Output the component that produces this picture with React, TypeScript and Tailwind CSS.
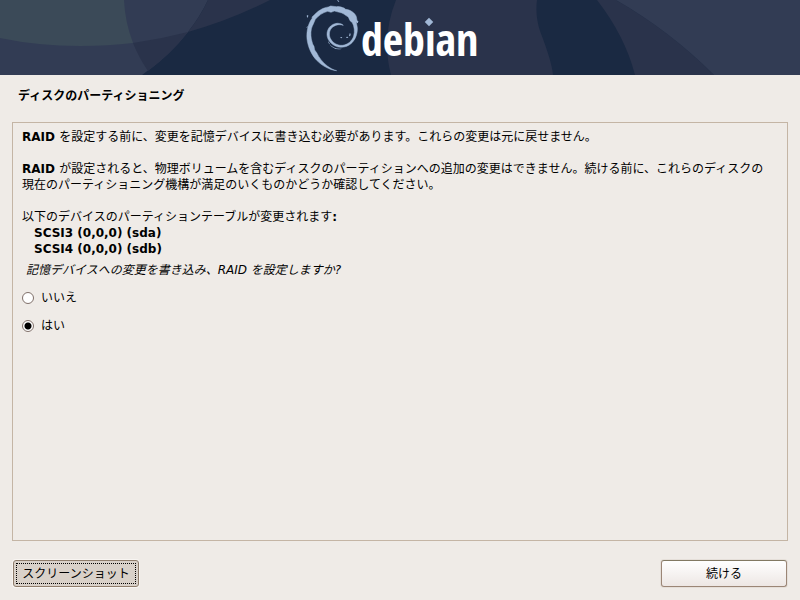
import React, { useState } from 'react';

const devices = ['SCSI3 (0,0,0) (sda)', 'SCSI4 (0,0,0) (sdb)'];

const choices = [
  { id: 'no', label: 'いいえ' },
  { id: 'yes', label: 'はい' },
];

const Swirl: React.FC = () => (
  <svg
    className="h-[75px] w-16 shrink-0"
    viewBox="0 0 192 225"
    fill="#a1b8d6"
    stroke="#a1b8d6"
    strokeWidth="1.5"
    aria-hidden="true"
  >
    <path d="M110 212C87 210 65 196 50 181C35 165 24 142 21 117C19 92 25 70 37 54C34 52 38 49 42 46C52 34 68 23 85 21L92 18L110 20C121 19 134 24 137 28C151 29 165 39 169 50L171 61L174 66L169 67L172 83C173 101 166 120 153 131C140 142 121 145 106 138C91 131 81 117 81 103C81 87 91 75 105 71C115 68 125 71 130 76C116 71 103 76 95 84C88 92 86 104 91 115C98 129 112 137 127 136C143 134 156 124 161 108C165 94 163 80 157 68L150 62L145 51C135 46 129 38 118 37L103 33L93 37L83 34C68 38 55 47 46 58L40 72L37 78C32 88 32 105 34 117L38 132L42 139L44 150L50 158C57 173 68 187 82 198C91 205 101 210 110 212Z" />
    <path
      stroke="none"
      d="M88 132C97 142 110 148 126 146C111 151 96 145 88 132ZM84 123L91 133L86 130ZM149 100l3 1-1 6-4 2zM122 111l5 1-2 3-4-2zM138 111l5-1 2 3-5 1zM20 47l4-2 1 3-3 6zM172 62l3 2-2 6-3-2zM111 0l4 1 3 5-3-1zM22 78l-3 6 4-2z"
    />
  </svg>
);

const Banner: React.FC = () => (
  <header className="relative h-[75px] shrink-0 overflow-hidden bg-[#1a2942]">
    <svg
      className="absolute inset-0 w-full h-full"
      viewBox="0 0 800 75"
      preserveAspectRatio="xMidYMid slice"
      aria-hidden="true"
    >
      <path fill="#323c54" d="M0 0H208Q200 17 188 32Q169 56 142 75H0Z" />
      <path fill="#3b4a58" d="M0 0H124Q125 22 133 43Q108 46 80 46Q38 46 0 38Z" />
      <path fill="#2a334b" d="M133 43Q161 39 188 32Q171 54 148 71Q139 58 133 43Z" />
      <path fill="#2a334b" d="M208 0H270Q231 20 188 32Q200 17 208 0Z" />
      <path fill="#2a334b" d="M396 0H537Q535 16 540 31Q552 62 553 75H391Q381 37 396 0Z" />
      <path fill="#2a334b" d="M597 0H616Q670 31 714 75H635Q625 36 597 0Z" />
      <path fill="#323c54" d="M616 0H800V75H714Q670 31 616 0Z" />
    </svg>
    <div className="relative mx-auto flex w-[200px] items-start">
      <Swirl />
      <div className="relative -ml-[3px] pt-[15px]">
        <span className="block text-[44px] leading-[48px] font-semibold text-white font-['Open_Sans_Condensed','Noto_Sans_Condensed','Roboto_Condensed',Roboto,sans-serif]">
          debian
        </span>
        {/* the diamond replaces the dot of the i */}
        <span className="absolute top-[18px] left-[62px] flex h-[13px] w-3 justify-center bg-[#2a334b]">
          <span className="mt-px h-[6px] w-[6px] rotate-45 bg-[#a1b8d6]" />
        </span>
      </div>
    </div>
  </header>
);

const App: React.FC = () => {
  const [choice, setChoice] = useState('yes');

  return (
    <div className="flex min-h-screen flex-col bg-[#efebe7] text-xs leading-4 text-black font-['DejaVu_Sans','Noto_Sans_CJK_JP',sans-serif]">
      <Banner />

      <h1 className="mt-[13px] px-[18px] font-bold">ディスクのパーティショニング</h1>

      <main lang="ja" className="mx-3 mt-[18px] flex-1 border border-[#c4b5a5] px-[9px] py-[6px]">
        <p>
          <b>RAID </b>を設定する前に、変更を記憶デバイスに書き込む必要があります。これらの変更は元に戻せません。
        </p>
        <p className="mt-4">
          <b>RAID </b>が設定されると、物理ボリュームを含むディスクのパーティションへの追加の変更はできません。続ける前に、これらのディスクの
          <br />
          現在のパーティショニング機構が満足のいくものかどうか確認してください。
        </p>
        <p className="mt-4">
          以下のデバイスのパーティションテーブルが変更されます<b>:</b>
        </p>
        <ul className="pl-3 font-bold">
          {devices.map((device) => (
            <li key={device}>{device}</li>
          ))}
        </ul>

        <fieldset className="mt-[5px]">
          <legend className="pl-1 italic">記憶デバイスへの変更を書き込み、RAID を設定しますか?</legend>
          <div className="mt-3 flex flex-col items-start gap-3">
            {choices.map((c) => (
              <label key={c.id} className="flex items-center gap-[7px]">
                <input
                  type="radio"
                  name="write-changes"
                  value={c.id}
                  checked={choice === c.id}
                  onChange={() => setChoice(c.id)}
                  className="h-3 w-3 appearance-none rounded-full border border-[#80706a] bg-white checked:bg-[radial-gradient(circle,#000_3px,#fff_4px)]"
                />
                {c.label}
              </label>
            ))}
          </div>
        </fieldset>
      </main>

      <footer className="flex justify-between px-[13px] pt-[19px] pb-[13px]">
        <button
          type="button"
          className="h-[27px] w-[126px] rounded-[3px] border border-[#8f7d6c] bg-[#d9d1c9] p-[2px] shadow-[0_0_0_1px_#f8f5f2]"
        >
          <span className="flex h-full items-center justify-center border border-dotted border-black">
            スクリーンショット
          </span>
        </button>
        <button
          type="button"
          className="h-[27px] w-[126px] rounded-[3px] border border-[#9b8676] border-t-[#827963] bg-linear-to-b from-white to-[#ede7e4] shadow-[0_0_0_1px_#e5dfd9]"
        >
          続ける
        </button>
      </footer>
    </div>
  );
};

export default App;
